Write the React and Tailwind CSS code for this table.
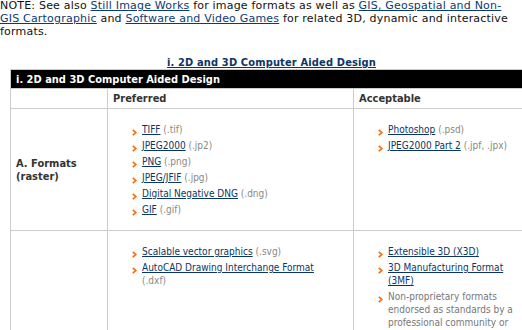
import React from "react";

const Bullet = () => (
  <span className="w-[10px] shrink-0 pt-[6px]">
    <svg width="5" height="7" viewBox="0 0 5 7" className="block">
      <path d="M0.8 0.8 L3.8 3.5 L0.8 6.2" fill="none" stroke="#ff6600" strokeWidth="1.6" />
    </svg>
  </span>
);

const Item = ({ link, ext, text }) => (
  <li className="flex mb-[3px]">
    <Bullet />
    <span>
      {link && <a className="text-[#0b3566] underline">{link}</a>}
      {ext && <span className="text-[#888]"> {ext}</span>}
      {text && <span className="text-[#777]">{text}</span>}
    </span>
  </li>
);

export default function App() {
  return (
    <div className="w-[522px] h-[330px] overflow-hidden bg-white font-['DejaVu_Sans','Liberation_Sans',sans-serif] text-[11px] leading-[13px] text-[#111]">
      <p className="w-[510px] -mt-[1px] tracking-[0.2px]">
        NOTE: See also <a className="text-[#0b3b73] underline">Still Image Works</a> for image formats as well as{" "}
        <a className="text-[#0b3b73] underline">GIS, Geospatial and Non-GIS Cartographic</a> and{" "}
        <a className="text-[#0b3b73] underline">Software and Video Games</a> for related 3D, dynamic and interactive formats.
      </p>
      <div className="ml-[10px] w-[523px] mt-[18px] font-['DejaVu_Sans_Condensed','DejaVu_Sans',sans-serif] font-stretch-condensed">
        <div className="text-center font-bold h-[13px] tracking-[0.15px]">
          <a className="text-[#0b3566] underline">i. 2D and 3D Computer Aided Design</a>
        </div>
        <table className="table-fixed border-collapse w-[523px]">
          <colgroup>
            <col className="w-[97px]" />
            <col className="w-[246px]" />
            <col className="w-[180px]" />
          </colgroup>
          <thead>
            <tr>
              <th colSpan={3} className="bg-black text-white font-bold text-left h-[19px] px-[5px] border border-[#ccc] leading-[13px] align-middle">
                i. 2D and 3D Computer Aided Design
              </th>
            </tr>
            <tr>
              <th className="border border-[#ccc] h-[20px] px-[5px]"></th>
              <th className="border border-[#ccc] h-[20px] px-[5px] text-left font-bold text-[#333]">Preferred</th>
              <th className="border border-[#ccc] h-[20px] px-[5px] text-left font-bold text-[#333]">Acceptable</th>
            </tr>
          </thead>
          <tbody className="text-[10px]">
            <tr>
              <td className="border border-[#ccc] px-[5px] align-middle font-bold text-[11px] text-[#333]">
                A. Formats (raster)
              </td>
              <td className="border border-[#ccc] align-top pt-[14px] pb-[11px]">
                <ul className="pl-[24px] pr-[22px]">
                  <Item link="TIFF" ext="(.tif)" />
                  <Item link="JPEG2000" ext="(.jp2)" />
                  <Item link="PNG" ext="(.png)" />
                  <Item link="JPEG/JFIF" ext="(.jpg)" />
                  <Item link="Digital Negative DNG" ext="(.dng)" />
                  <Item link="GIF" ext="(.gif)" />
                </ul>
              </td>
              <td className="border border-[#ccc] align-top pt-[14px]">
                <ul className="pl-[24px] pr-[14px]">
                  <Item link="Photoshop" ext="(.psd)" />
                  <Item link="JPEG2000 Part 2" ext="(.jpf, .jpx)" />
                </ul>
              </td>
            </tr>
            <tr>
              <td className="border border-[#ccc] px-[5px]"></td>
              <td className="border border-[#ccc] align-top pt-[14px] pb-[14px]">
                <ul className="pl-[24px] pr-[22px]">
                  <Item link="Scalable vector graphics" ext="(.svg)" />
                  <Item link="AutoCAD Drawing Interchange Format" ext="(.dxf)" />
                </ul>
              </td>
              <td className="border border-[#ccc] align-top pt-[14px] pb-[14px]">
                <ul className="pl-[24px] pr-[14px]">
                  <Item link="Extensible 3D (X3D)" />
                  <Item link="3D Manufacturing Format (3MF)" />
                  <Item text="Non-proprietary formats endorsed as standards by a professional community or industry group" />
                </ul>
              </td>
            </tr>
          </tbody>
        </table>
      </div>
    </div>
  );
}
